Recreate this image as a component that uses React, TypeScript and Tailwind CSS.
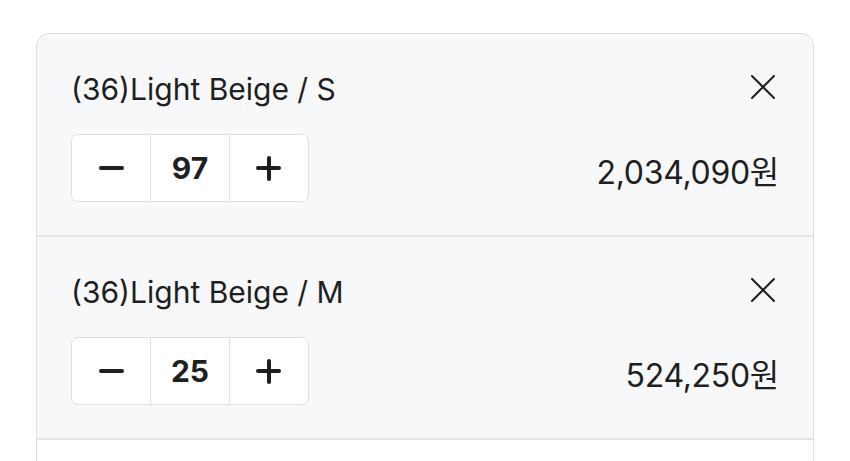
import React, { useState } from 'react'

type Item = {
  id: number
  name: string
  qty: number
  unit: number
}

const font = { fontFamily: 'Inter, "Noto Sans CJK KR", sans-serif' }

function XIcon() {
  return (
    <svg width="26" height="26" viewBox="0 0 26 26" fill="none" stroke="#1f1f1f" strokeWidth="2" strokeLinecap="round">
      <path d="M2 2 L24 24 M24 2 L2 24" />
    </svg>
  )
}

function Stepper({ value, onChange }: { value: number; onChange: (v: number) => void }) {
  return (
    <div className="flex h-[68px] w-[238px] rounded-[7px] border border-[#dcdfe3] bg-white overflow-hidden">
      <button onClick={() => onChange(Math.max(1, value - 1))} className="flex w-[79px] items-center justify-center">
        <span className="block h-[4px] w-[25px] rounded-sm bg-[#1f1f1f]" />
      </button>
      <div className="flex w-[80px] items-center justify-center border-x border-[#dcdfe3] text-[30px] font-bold text-[#1f1f1f]">
        {value}
      </div>
      <button onClick={() => onChange(value + 1)} className="relative flex w-[79px] items-center justify-center">
        <span className="block h-[4px] w-[25px] rounded-sm bg-[#1f1f1f]" />
        <span className="absolute block h-[25px] w-[4px] rounded-sm bg-[#1f1f1f]" />
      </button>
    </div>
  )
}

export default function App() {
  const [items, setItems] = useState<Item[]>([
    { id: 1, name: '(36)Light Beige / S', qty: 97, unit: 20970 },
    { id: 2, name: '(36)Light Beige / M', qty: 25, unit: 20970 },
  ])

  function setQty(id: number, qty: number) {
    setItems((list) => list.map((it) => (it.id === id ? { ...it, qty } : it)))
  }

  return (
    <div className="min-h-screen bg-white pt-[33px] px-[36px]" style={font}>
      <div className="rounded-t-[14px] border border-b-0 border-[#dcdfe3] overflow-hidden">
        {items.map((it) => (
          <div key={it.id} className="h-[203px] border-b-2 border-[#e3e5e8] bg-[#f7f8fa] pl-[34px] pr-[34px] pt-[35px]">
            <div className="flex h-[40px] items-center justify-between">
              <span className="text-[30px] text-[#1f1f1f]">{it.name}</span>
              <button className="mr-[3px] -mt-[4px]">
                <XIcon />
              </button>
            </div>
            <div className="mt-[25px] flex items-center justify-between">
              <Stepper value={it.qty} onChange={(v) => setQty(it.id, v)} />
              <span className="mt-[10px] text-[32px] text-[#1f1f1f] tracking-[-0.3px]">
                {(it.qty * it.unit).toLocaleString('en-US')}원
              </span>
            </div>
          </div>
        ))}
        <div className="h-[80px] bg-white" />
      </div>
    </div>
  )
}
